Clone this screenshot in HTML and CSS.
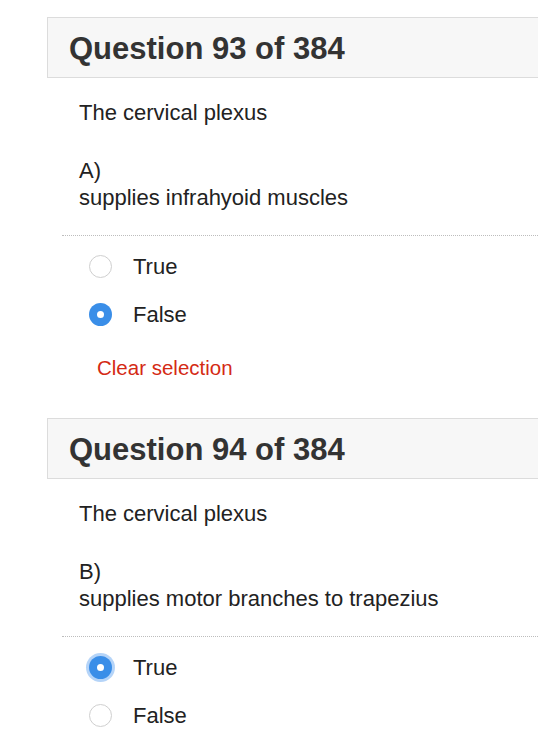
FILE: index.html
```html
<!DOCTYPE html>
<html>
<head>
<meta charset="utf-8">
<link rel="stylesheet" href="styles.css">
</head>
<body>
<div class="page">
  <section class="question">
    <div class="q-header"><h2 class="q-title">Question 93 of 384</h2></div>
    <div class="q-content">
      <p class="q-stem">The cervical plexus</p>
      <p class="q-part">A)<br>supplies infrahyoid muscles</p>
      <div class="answers">
        <label class="option"><span class="radio"></span><span class="opt-label">True</span></label>
        <label class="option"><span class="radio checked"></span><span class="opt-label">False</span></label>
        <a class="clear">Clear selection</a>
      </div>
    </div>
  </section>
  <section class="question">
    <div class="q-header"><h2 class="q-title">Question 94 of 384</h2></div>
    <div class="q-content">
      <p class="q-stem">The cervical plexus</p>
      <p class="q-part">B)<br>supplies motor branches to trapezius</p>
      <div class="answers">
        <label class="option"><span class="radio checked focused"></span><span class="opt-label">True</span></label>
        <label class="option"><span class="radio"></span><span class="opt-label">False</span></label>
      </div>
    </div>
  </section>
</div>
</body>
</html>
```

FILE: styles.css
```css
html, body {
  margin: 0;
  padding: 0;
  background: #fff;
}
body {
  font-family: "Liberation Sans", Arial, Helvetica, sans-serif;
  color: #222;
}
.page {
  padding: 17px 0 0 47px;
}
.question {
  margin-bottom: 37px;
}
.q-header {
  height: 59px;
  background: #f7f7f7;
  border: 1px solid #dcdcdc;
  border-right: none;
  display: flex;
  align-items: center;
  padding-left: 21px;
}
.q-title {
  margin: 0;
  font-size: 31px;
  font-weight: bold;
  color: #333;
  line-height: 1;
  padding-top: 2px;
}
.q-content {
  margin-left: 15px;
}
.q-stem, .q-part {
  margin: 0;
  padding-left: 17px;
  font-size: 22px;
  line-height: 27px;
}
.q-stem {
  margin-top: 21px;
}
.q-part {
  margin-top: 31px;
}
.answers {
  margin-top: 24px;
  border-top: 1px dotted #bdbdbd;
  padding-top: 6px;
  display: flex;
  flex-direction: column;
}
.option {
  height: 48px;
  display: flex;
  align-items: center;
  padding-left: 27px;
  gap: 21px;
}
.radio {
  width: 23px;
  height: 23px;
  box-sizing: border-box;
  border-radius: 50%;
  border: 1.5px solid #cfcfcf;
  background: #fff;
  display: flex;
  align-items: center;
  justify-content: center;
}
.radio.checked {
  border: none;
  background: #3a8ee8;
}
.radio.checked::after {
  content: "";
  width: 7px;
  height: 7px;
  border-radius: 50%;
  background: #fff;
}
.radio.focused {
  box-shadow: 0 0 0 3px rgba(90, 160, 240, 0.45);
}
.opt-label {
  font-size: 22px;
  line-height: 27px;
  color: #222;
}
.clear {
  margin-top: 16px;
  padding-left: 35px;
  font-size: 20.5px;
  line-height: 27px;
  color: #d42a14;
}
```
